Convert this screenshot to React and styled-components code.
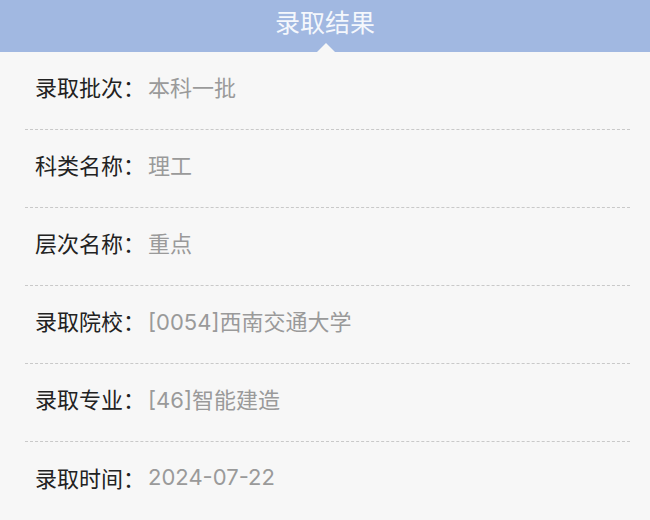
import styled, { createGlobalStyle } from 'styled-components';

const GlobalStyle = createGlobalStyle`
  html, body {
    margin: 0;
    padding: 0;
    background: #f7f7f7;
  }
  body {
    font-family: "Noto Sans CJK SC", "Noto Sans", sans-serif;
  }
`;

// Barra superior com o título
const Header = styled.div`
  position: relative;
  height: 52px;
  background: #a1b8e1;
  display: flex;
  justify-content: center;
  align-items: flex-start;
`;

const HeaderTitle = styled.h1`
  margin: 0;
  padding-top: 4px;
  font-size: 25px;
  line-height: 34px;
  font-weight: 400;
  color: #f4f7fc;
`;

// Pequeno triângulo que aponta para o título
const Notch = styled.span`
  position: absolute;
  left: 317px;
  bottom: 0;
  width: 0;
  height: 0;
  border-left: 9px solid transparent;
  border-right: 9px solid transparent;
  border-bottom: 9px solid #f7f7f7;
`;

const List = styled.div`
  display: flex;
  flex-direction: column;
`;

const Row = styled.div`
  display: flex;
  align-items: center;
  box-sizing: border-box;
  height: 78px;
  margin: 0 20px 0 25px;
  padding: 0 0 9px 10px;
  font-size: 22px;
  border-bottom: ${({ $last }) => ($last ? 'none' : '1px dashed #c9c9c9')};
`;

const Label = styled.span`
  color: #222;
`;

const Value = styled.span`
  margin-left: 3px;
  font-family: Inter, "Noto Sans CJK SC", sans-serif;
  color: #9a9a9a;
`;

const items = [
  { label: '录取批次', value: '本科一批' },
  { label: '科类名称', value: '理工' },
  { label: '层次名称', value: '重点' },
  { label: '录取院校', value: '[0054]西南交通大学' },
  { label: '录取专业', value: '[46]智能建造' },
  { label: '录取时间', value: '2024-07-22' },
];

const App = () => {
  return (
    <>
      <GlobalStyle />
      <Header>
        <HeaderTitle>录取结果</HeaderTitle>
        <Notch />
      </Header>
      <List>
        {items.map((item, i) => (
          <Row key={item.label} $last={i === items.length - 1}>
            <Label>{item.label}：</Label>
            <Value>{item.value}</Value>
          </Row>
        ))}
      </List>
    </>
  );
};

export default App;
